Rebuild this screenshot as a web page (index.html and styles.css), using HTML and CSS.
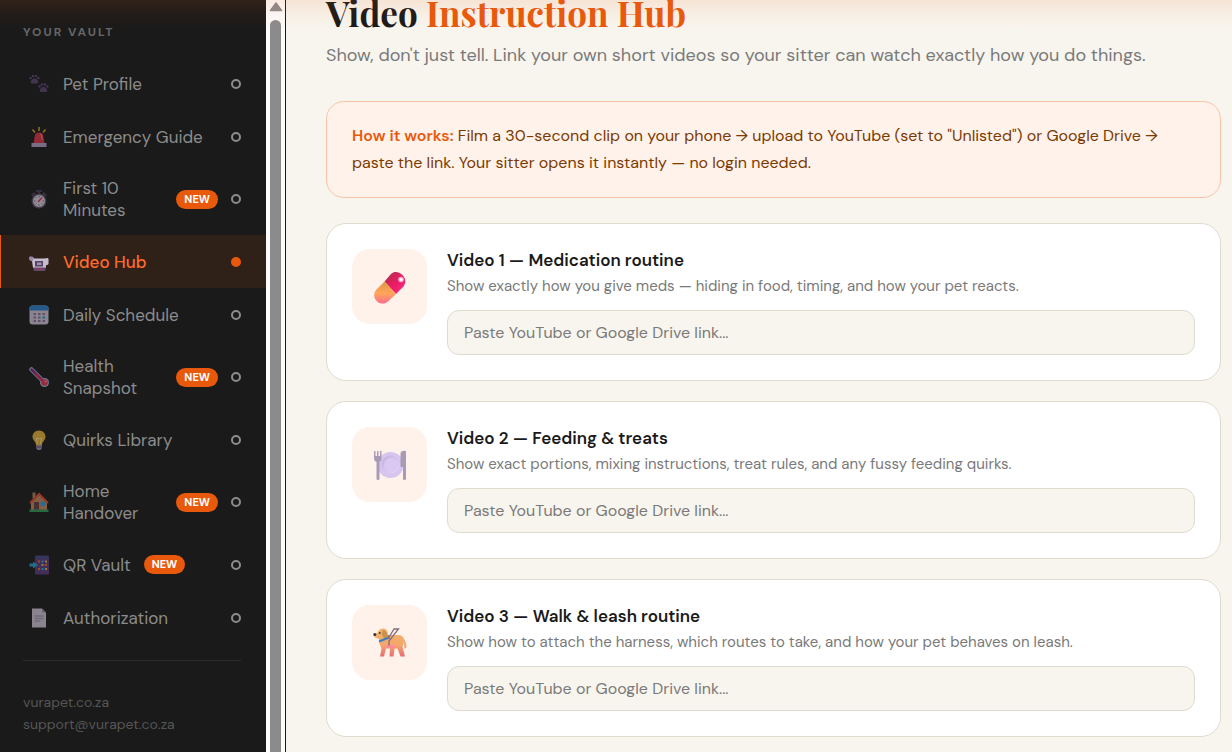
FILE: index.html
```html
<!DOCTYPE html>
<html lang="en">
<head>
    <meta charset="UTF-8">
    <meta name="viewport" content="width=device-width, initial-scale=1.0">
    <title>Video Instruction Hub</title>
    <link rel="stylesheet" href="styles.css">
</head>
<body>

<div class="top-glow"></div>

<aside class="sidebar">
    <div class="sidebar-inner">
        <div class="sidebar-title">YOUR VAULT</div>
        <nav class="nav">
            <a class="nav-item" href="#profile">
                <span class="nav-icon"><svg viewBox="0 0 20 20"><g fill="#5d4476"><path d="M2.500 6Q5.500 2.500 8.500 6Q10.500 9.500 7.500 9.500H3.500Q.500 9.500 2.500 6Z"/><circle cx="1.600" cy="4" r="1.300"/><circle cx="4" cy="2" r="1.300"/><circle cx="7" cy="2" r="1.300"/><circle cx="9.400" cy="4" r="1.300"/><path d="M11.500 14.500Q14.500 11 17.500 14.500Q19.500 18 16.500 18H12.500Q9.500 18 11.500 14.500Z"/><circle cx="10.600" cy="12.500" r="1.300"/><circle cx="13" cy="10.500" r="1.300"/><circle cx="16" cy="10.500" r="1.300"/><circle cx="18.400" cy="12.500" r="1.300"/></g></svg></span>
                <span class="nav-label">Pet Profile</span>
                <span class="dot"></span>
            </a>
            <a class="nav-item" href="#emergency">
                <span class="nav-icon"><svg viewBox="0 0 20 20"><path d="M10 0v4M3.500 2.500l2.500 3M16.500 2.500l-2.500 3" stroke="#e0b030" stroke-width="1.500"/><path d="M4.500 16L6 8Q6.500 5.500 10 5.500T14 8L15.500 16Z" fill="#e8334a"/><path d="M11 7q1.500 0 1.700 2l.5 4" stroke="#ff8a8a" stroke-width="1" fill="none"/><path d="M2.500 16h15v4h-15z" fill="#b9a5c9"/></svg></span>
                <span class="nav-label">Emergency Guide</span>
                <span class="dot"></span>
            </a>
            <a class="nav-item" href="#first10">
                <span class="nav-icon"><svg viewBox="0 0 20 20"><path d="M7 1h6v2h-2v3H9V3H7zM2 6l3-3 2 2-3 3zM18 6l-3-3-2 2 3 3z" fill="#4b3a59"/><circle cx="10" cy="12" r="7.500" fill="#64516f"/><circle cx="10" cy="12" r="6" fill="#ded8e4"/><path d="M10 7v1.500M10 15.500V17M5 12h1.500M13.500 12H15M6.500 8.500l1 1M13.500 15.500l-1-1M6.500 15.500l1-1" stroke="#796781"/><path d="M9 13l4-4.500" stroke="#e52b60" stroke-width="1.500"/></svg></span>
                <span class="nav-label">First 10 Minutes</span>
                <span class="badge">NEW</span>
                <span class="dot"></span>
            </a>
            <a class="nav-item active" href="#videos">
                <span class="nav-icon"><svg viewBox="0 0 20 20"><path d="M.500 5l3.500 0 1 1.500H15l4-.500.500 1v5l-1 1H17V16H4L3 9 .500 8z" fill="#d8cfe3"/><path d="M.500 4.500h3l1 2-1 3L.500 8z" fill="#a593b8"/><path d="M6 9h8v5.500H6z" fill="#5b4770"/><path d="M8 10.500h4.500V13H8z" fill="#aaa1b7"/><path d="M4 15.500h13l-1 3.500H5z" fill="#665078"/><circle cx="9" cy="17" r=".7" fill="#f24"/><circle cx="12" cy="17" r=".7" fill="#f24"/></svg></span>
                <span class="nav-label">Video Hub</span>
                <span class="dot"></span>
            </a>
            <a class="nav-item" href="#schedule">
                <span class="nav-icon"><svg viewBox="0 0 20 20"><rect x=".5" y=".5" width="19" height="19" rx="3" fill="#d6cade"/><path d="M.500 5.500V3.500Q.500.500 3.500.500h13q3 0 3 3v2z" fill="#2b83d6"/><path d="M4.500 8h2.500v2H4.500zM9 8h2.500v2H9zM13.500 8H16v2h-2.500zM4.500 11.500h2.500v2H4.500zM9 11.500h2.500v2H9zM4.500 15h2.500v2H4.500zM9 15h2.500v2H9zM13.500 15H16v2h-2.500z" fill="#8d7a9d"/><path d="M13.500 11.500H16v2h-2.500z" fill="#149ce8"/></svg></span>
                <span class="nav-label">Daily Schedule</span>
                <span class="dot"></span>
            </a>
            <a class="nav-item" href="#health">
                <span class="nav-icon"><svg viewBox="0 0 20 20"><path d="M2.500 2.500L15 15" stroke="#a3bedb" stroke-width="4.500" stroke-linecap="round"/><circle cx="15.500" cy="15.500" r="4.500" fill="#a3bedb"/><path d="M2.500 2.500L15 15" stroke="#83277b" stroke-width="2.500" stroke-linecap="round"/><path d="M6.500 7L15 15.500" stroke="#eb2459" stroke-width="2"/><circle cx="15.500" cy="15.500" r="3.200" fill="#f03452"/><circle cx="16.500" cy="14.500" r="1" fill="#ff9a9a"/></svg></span>
                <span class="nav-label">Health Snapshot</span>
                <span class="badge">NEW</span>
                <span class="dot"></span>
            </a>
            <a class="nav-item" href="#quirks">
                <span class="nav-icon"><svg viewBox="0 0 20 20"><path d="M10 .500c-4 0-6.500 3-6.500 6.300 0 3.700 3.500 4.700 3.500 8.200h6c0-3.500 3.500-4.500 3.500-8.200C16.500 3.500 14 .500 10 .500z" fill="#f0b83b"/><path d="M8.500 14L7.500 8l2.500 1 2.500-1-1 6" stroke="#fff0a0" fill="none"/><path d="M7 15h6v3l-1.500 2h-3L7 18z" fill="#a994b5"/><path d="M7 17h6" stroke="#68506f"/></svg></span>
                <span class="nav-label">Quirks Library</span>
                <span class="dot"></span>
            </a>
            <a class="nav-item" href="#home">
                <span class="nav-icon"><svg viewBox="0 0 20 20"><path d="M3.500.500h3v6h-3z" fill="#b68462"/><path d="M2 10l8-8 8 8v8H2z" fill="#c98c5d"/><path d="M1 11L10 2l9 9" fill="none" stroke="#e34e36" stroke-width="2"/><path d="M5 10h5v8H5z" fill="#693e44"/><rect x="11.500" y="9.500" width="5" height="4.500" rx="1" fill="#35a2df"/><path d="M.500 17.500h19V20H.500z" fill="#369d58"/></svg></span>
                <span class="nav-label">Home Handover</span>
                <span class="badge">NEW</span>
                <span class="dot"></span>
            </a>
            <a class="nav-item" href="#qr">
                <span class="nav-icon"><svg viewBox="0 0 20 20"><rect x="6" y=".5" width="14" height="19" rx="1" fill="#5b3d82"/><path d="M7 1h12v3H7z" fill="#474b85"/><path d="M9 5.500h2v2H9zM16 9h2v2h-2zM9 13h2v2H9z" fill="#f26a35"/><path d="M12.500 5.500h2v2h-2zM12.500 13h2v2h-2z" fill="#31b0e9"/><path d="M16 5.500h2v2h-2zM12.500 9h2v2h-2zM16 13h2v2h-2z" fill="#eebe3b"/><path d="M.500 8.500H4V6.500l5 3.500-5 3.500v-2H.500z" fill="#27a5dc"/></svg></span>
                <span class="nav-label">QR Vault</span>
                <span class="badge">NEW</span>
                <span class="dot"></span>
            </a>
            <a class="nav-item" href="#authorization">
                <span class="nav-icon"><svg viewBox="0 0 20 20"><path d="M3 .500h10L17 4.500v15H3z" fill="#d6cbdc"/><path d="M13 .500v4h4z" fill="#9c8fa8"/><path d="M5.500 8h9M5.500 10.500h9M5.500 13h6" stroke="#ad9fb6" stroke-width="1.300"/></svg></span>
                <span class="nav-label">Authorization</span>
                <span class="dot"></span>
            </a>
        </nav>
        <div class="sidebar-footer">
            <div>vurapet.co.za</div>
            <div>support@vurapet.co.za</div>
        </div>
    </div>
    <div class="scroll-track">
        <svg class="scroll-arrow" viewBox="0 0 14 10"><path d="M7 1L12.500 8.500H1.500Z" fill="#8b8b8b" stroke="#8b8b8b" stroke-width="1.500" stroke-linejoin="round"/></svg>
        <div class="scroll-thumb"></div>
    </div>
</aside>

<main class="content">
    <h1>Video <span>Instruction Hub</span></h1>
    <p class="subtitle">Show, don't just tell. Link your own short videos so your sitter can watch exactly how you do things.</p>

    <div class="callout">
        <strong>How it works:</strong> Film a 30-second clip on your phone → upload to YouTube (set to "Unlisted") or Google Drive → paste the link. Your sitter opens it instantly — no login needed.
    </div>

    <div class="cards">
        <section class="card">
            <div class="card-icon">
                <svg viewBox="0 0 34 34">
                    <defs>
                        <linearGradient id="pillTop" x1="0" y1="0" x2="1" y2="1"><stop offset="0" stop-color="#a83248"/><stop offset=".55" stop-color="#ee1b66"/><stop offset="1" stop-color="#f5358a"/></linearGradient>
                        <linearGradient id="pillLow" x1="0" y1="0" x2="0" y2="1"><stop offset="0" stop-color="#e0993f"/><stop offset=".55" stop-color="#ffa45c"/><stop offset="1" stop-color="#ff6c8c"/></linearGradient>
                    </defs>
                    <path d="M11.500 11.500L18 4C24-2.500 37 7.500 30.500 16.500L23 24Z" fill="url(#pillTop)"/>
                    <path d="M11.500 11.500L3.500 19.500C-3.500 27.500 7 38 15 31.500L23 24Z" fill="url(#pillLow)"/>
                    <circle cx="28" cy="9.500" r="2.800" fill="#ffa9cb"/><circle cx="28" cy="9.500" r="1.500" fill="#fff"/>
                </svg>
            </div>
            <div class="card-body">
                <label class="card-title" for="video1">Video 1 — Medication routine</label>
                <p>Show exactly how you give meds — hiding in food, timing, and how your pet reacts.</p>
                <input type="url" id="video1" placeholder="Paste YouTube or Google Drive link...">
            </div>
        </section>
        <section class="card">
            <div class="card-icon">
                <svg viewBox="0 0 34 34">
                    <defs><linearGradient id="plate" x1="0" y1="0" x2="1" y2="1"><stop offset="0" stop-color="#c4abdf"/><stop offset="1" stop-color="#e5d8fa"/></linearGradient></defs>
                    <circle cx="17.500" cy="17" r="13" fill="#d7c5ef"/><circle cx="17.500" cy="16.500" r="9" fill="url(#plate)"/><circle cx="18" cy="17" r="7" fill="#dac8f3"/>
                    <path d="M1 3h1.500v5H4V3h1.500v5H7V3h1.500v8q0 2-2 3v17q0 1-1.500 1t-1.500-1V14Q1 13 1 11z" fill="#a99bb5"/>
                    <path d="M27.500 5q1-3 5.500-2v28q0 1-1.500 1T30 31V19h-2.500z" fill="#a99bb5"/>
                </svg>
            </div>
            <div class="card-body">
                <label class="card-title" for="video2">Video 2 — Feeding &amp; treats</label>
                <p>Show exact portions, mixing instructions, treat rules, and any fussy feeding quirks.</p>
                <input type="url" id="video2" placeholder="Paste YouTube or Google Drive link...">
            </div>
        </section>
        <section class="card">
            <div class="card-icon">
                <svg viewBox="0 0 34 34">
                    <defs><linearGradient id="dog" x1="0" y1="0" x2="0" y2="1"><stop offset="0" stop-color="#edb66b"/><stop offset=".6" stop-color="#f5a56b"/><stop offset="1" stop-color="#e96b75"/></linearGradient></defs>
                    <path d="M1 8L4.500 7Q6 2 11 2.500q4 1 4 6.500l10 0Q30 9 31.500 14q3 5 1.500 8-1 1-1.500 0l-.5-6-1.500 5 2.500 9.500h-4.500l-3-8-3 0-1 8h-4l.500-8h-4l-2 8H7l1.500-8Q6 18 6 13 4 12.500 1.500 11z" fill="url(#dog)"/>
                    <path d="M9.500 4q5 0 4.500 7l-2.500 2-2.500-4z" fill="#c9914b"/>
                    <circle cx="1.800" cy="8.500" r="1.500" fill="#39303c"/><circle cx="6.800" cy="7" r=".9" fill="#40303b"/>
                    <path d="M6 15.500L16 11.500" stroke="#377ec6" stroke-width="2"/>
                    <path d="M15 13L21 3h4.500L16 15v6M15 9l1 4" stroke="#806d78" stroke-width="1.300" fill="none"/>
                    <path d="M13 20.500h10" stroke="#ff87a4" stroke-width="2"/>
                </svg>
            </div>
            <div class="card-body">
                <label class="card-title" for="video3">Video 3 — Walk &amp; leash routine</label>
                <p>Show how to attach the harness, which routes to take, and how your pet behaves on leash.</p>
                <input type="url" id="video3" placeholder="Paste YouTube or Google Drive link...">
            </div>
        </section>
    </div>
</main>

</body>
</html>
```
FILE: styles.css
```css
* {
    box-sizing: border-box;
}
body {
    display: flex;
    min-height: 100vh;
    margin: 0;
    background-color: #f8f5ee;
    color: #1a1a1a;
    font-family: "DM Sans", Inter, "Liberation Sans", sans-serif;
    font-size: 16px;
}
/* Soft glow under the page header, lies over both columns */
.top-glow {
    position: absolute;
    top: 0;
    left: 0;
    width: 100%;
    height: 30px;
    background: linear-gradient(rgba(232, 89, 12, 0.11), rgba(232, 89, 12, 0.04) 50%, transparent);
    pointer-events: none;
}

/* Sidebar */
.sidebar {
    display: flex;
    flex: 0 0 286px;
    background-color: #1a1a1a;
    border-right: 1px solid #1a1a1a;
}
.sidebar-inner {
    flex: 1;
    padding-top: 22px;
}
.sidebar-title {
    padding-left: 23px;
    margin-bottom: 15px;
    color: #666;
    font-size: 12px;
    font-weight: 700;
    line-height: 20px;
    letter-spacing: 2px;
}
.nav-item {
    display: flex;
    align-items: center;
    gap: 13px;
    min-height: 53px;
    padding: 14px 25px 14px 28px;
    border-left: 1px solid transparent;
    color: #8c8c8c;
    font-size: 17px;
    line-height: 22px;
    text-decoration: none;
}
.nav-icon {
    flex: 0 0 21px;
    height: 20px;
    opacity: 0.6;
}
.nav-icon svg {
    display: block;
    width: 20px;
    height: 20px;
}
.badge {
    padding: 0 8px;
    border-radius: 10px;
    background-color: #e8590c;
    color: #fff;
    font-size: 11px;
    font-weight: 700;
    line-height: 19px;
}
.dot {
    flex: 0 0 10px;
    height: 10px;
    margin-left: auto;
    border: 2px solid #8c8c8c;
    border-radius: 50%;
}
.active {
    border-left-color: #e8590c;
    background-color: #2f2018;
    color: #ff6b2b;
    font-weight: 500;
}
.active .nav-icon {
    opacity: 0.9;
}
.active .dot {
    border-color: #e8590c;
    background-color: #e8590c;
}
.sidebar-footer {
    margin: 16px 25px 0 23px;
    padding-top: 30px;
    border-top: 1px solid #2b2b2b;
    color: #555;
    font-size: 14px;
    line-height: 22px;
}
.scroll-track {
    display: flex;
    flex-direction: column;
    align-items: center;
    flex: 0 0 19px;
    padding-top: 2px;
    background-color: #fcfcfc;
}
.scroll-arrow {
    width: 14px;
    height: 10px;
    margin-bottom: 8px;
}
.scroll-thumb {
    flex: 1;
    width: 11px;
    border-radius: 6px 6px 0 0;
    background-color: #8b8b8b;
}

/* Main column */
.content {
    flex: 1;
    min-width: 0;
    padding: 0 11px 14px 40px;
}
h1 {
    margin: 0 0 16px;
    font-family: "Playfair Display", "Liberation Serif", serif;
    font-size: 35px;
    font-weight: 700;
    line-height: 26px;
}
h1 span {
    color: #e8590c;
}
.subtitle {
    margin: 0 0 33px;
    color: #7a7a7a;
    font-size: 18px;
    line-height: 26px;
}
.callout {
    margin-bottom: 25px;
    padding: 20px 25px 21px;
    border: 1px solid #f7c4a8;
    border-radius: 18px;
    background-color: #fff2eb;
    color: #7a3a00;
    line-height: 27px;
}
.callout strong {
    color: #e8590c;
    font-weight: 600;
}
.cards {
    display: grid;
    gap: 20px;
}
.card {
    display: flex;
    gap: 20px;
    padding: 25px;
    border: 1px solid #dfdbcf;
    border-radius: 20px;
    background-color: #fff;
}
.card-icon {
    display: flex;
    align-items: center;
    justify-content: center;
    flex: 0 0 75px;
    height: 75px;
    border-radius: 18px;
    background-color: #fff2eb;
}
.card-icon svg {
    width: 34px;
    height: 34px;
}
.card-body {
    flex: 1;
    min-width: 0;
}
.card-title {
    display: block;
    font-size: 17px;
    font-weight: 600;
    line-height: 22px;
}
.card p {
    margin: 4px 0 13px;
    color: #7a7a7a;
    font-size: 15px;
    line-height: 22px;
}
.card input {
    display: block;
    width: 100%;
    height: 45px;
    padding: 0 16px;
    border: 1px solid #dfdbcf;
    border-radius: 12px;
    background-color: #f8f5ee;
    color: #1a1a1a;
    font-family: inherit;
    font-size: 16px;
}
.card input::placeholder {
    color: #7a7a7a;
}
```
